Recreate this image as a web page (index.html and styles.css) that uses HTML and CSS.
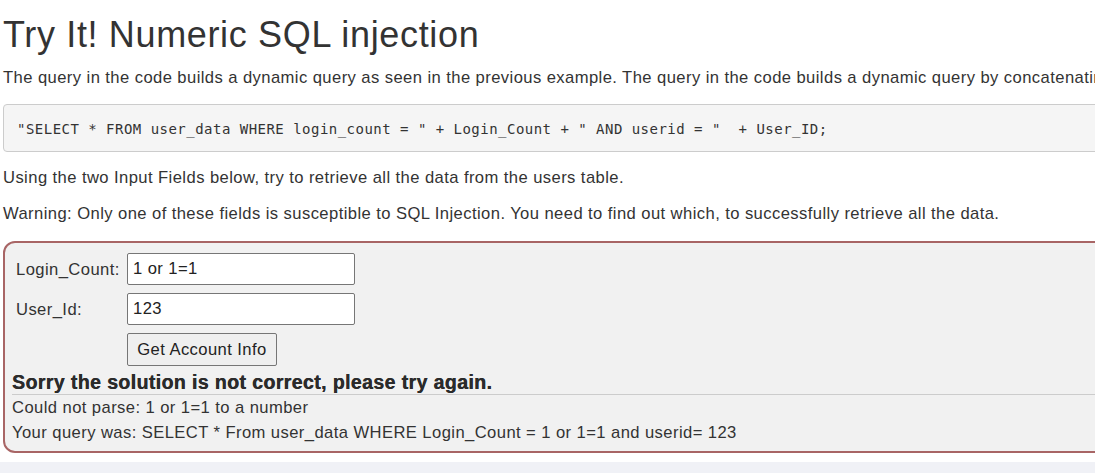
FILE: index.html
```html
<!DOCTYPE html>
<html lang="en">
<head>
<meta charset="utf-8">
<title>Try It! Numeric SQL injection</title>
<link rel="stylesheet" href="styles.css">
</head>
<body>
<main class="page">
  <h1 class="title">Try It! Numeric SQL injection</h1>
  <p class="lead">The query in the code builds a dynamic query as seen in the previous example. The query in the code builds a dynamic query by concatenating a number making it susceptible to Numeric SQL injection:</p>
  <pre class="code">"SELECT * FROM user_data WHERE login_count = " + Login_Count + " AND userid = "  + User_ID;</pre>
  <p class="text">Using the two Input Fields below, try to retrieve all the data from the users table.</p>
  <p class="text warn">Warning: Only one of these fields is susceptible to SQL Injection. You need to find out which, to successfully retrieve all the data.</p>
  <section class="attack">
    <form class="attack-form">
      <label class="lbl" for="lc">Login_Count:</label>
      <input class="field" id="lc" type="text" value="1 or 1=1">
      <label class="lbl" for="uid">User_Id:</label>
      <input class="field" id="uid" type="text" value="123">
      <span class="spacer"></span>
      <button class="btn" type="button">Get Account Info</button>
    </form>
    <div class="feedback">Sorry the solution is not correct, please try again.</div>
    <div class="output">
      <div class="out-line">Could not parse: 1 or 1=1 to a number</div>
      <div class="out-line">Your query was: SELECT * From user_data WHERE Login_Count = 1 or 1=1 and userid= 123</div>
    </div>
  </section>
</main>
<div class="next-strip"></div>
</body>
</html>
```
FILE: styles.css
```css
html, body {
  overflow: hidden;
}
body {
  margin: 0;
  background: #ffffff;
  color: #333333;
  font-family: "Liberation Sans", Arial, Helvetica, sans-serif;
  font-size: 16.6px;
  letter-spacing: 0.42px;
}
.page {
  width: 1700px;
  padding: 14px 0 0 3px;
}
.title {
  margin: 0;
  font-size: 36px;
  font-weight: 400;
  line-height: 42px;
  letter-spacing: 0.65px;
  color: #333333;
}
.lead {
  margin: 12px 0 0 0;
  line-height: 19px;
}
.code {
  margin: 17px 0 0 0;
  padding: 14px 13px 12px 13px;
  background: #f5f5f5;
  border: 1px solid #cccccc;
  border-radius: 4px;
  font-family: "DejaVu Sans Mono", "Liberation Mono", monospace;
  font-size: 14px;
  letter-spacing: 0.48px;
  line-height: 20px;
  color: #333333;
}
.text {
  margin: 16px 0 0 0;
  line-height: 19px;
}
.warn {
  margin-top: 17px;
}
.attack {
  margin-top: 18px;
  border: 2px solid #a86565;
  border-radius: 12px;
  background: #f1f1f1;
  padding: 10px 7px 6px 7px;
}
.attack-form {
  display: grid;
  grid-template-columns: 111px 228px;
  row-gap: 8px;
  align-items: center;
  justify-items: start;
  margin: 0 0 0 4px;
}
.lbl {
  line-height: 19px;
}
.field {
  box-sizing: border-box;
  width: 228px;
  height: 32px;
  margin: 0;
  padding: 0 5px;
  border: 1px solid #767676;
  border-radius: 2px;
  background: #ffffff;
  font-family: "Liberation Sans", Arial, sans-serif;
  font-size: 16.6px;
  letter-spacing: 0.42px;
  color: #222222;
}
.btn {
  box-sizing: border-box;
  width: 150px;
  height: 33px;
  margin: 0;
  padding: 0;
  border: 1px solid #767676;
  border-radius: 2px;
  background: #efefef;
  font-family: "Liberation Sans", Arial, sans-serif;
  font-size: 16.6px;
  letter-spacing: 0.42px;
  color: #222222;
}
.feedback {
  margin-top: 5px;
  font-size: 19.5px;
  font-weight: 700;
  letter-spacing: 0.4px;
  line-height: 23px;
  color: #2b2b2b;
  text-shadow: 0.35px 0 0 #2b2b2b;
  border-bottom: 1px solid #cccccc;
}
.out-line {
  line-height: 25px;
}
.next-strip {
  margin-top: 9px;
  height: 30px;
  background: #f0f1f6;
}
```
